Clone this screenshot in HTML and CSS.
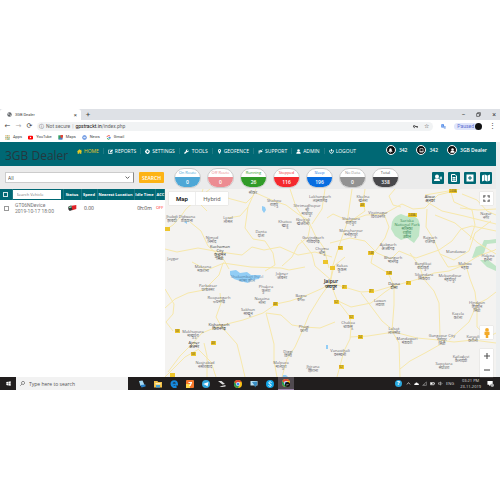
FILE: index.html
```
<!DOCTYPE html>
<html lang="en">
<head>
  <meta charset="UTF-8">
  <meta name="viewport" content="width=device-width, initial-scale=1.0">
  <title>3GB Dealer</title>
  <link rel="stylesheet" href="styles.css">
</head>
<body>

<svg class="sprite" aria-hidden="true">
  <symbol id="home" viewBox="0 0 16 16"><path d="M8 1 0 8l1 1 1-1v7h5v-4h2v4h5V8l1 1 1-1-2-2V2h-2v2z"/></symbol>
  <symbol id="edit" viewBox="0 0 16 16"><path d="M1 2h9L8 4H3v9h9V9l2-2v8H1z"/><path d="m6 8 7-7 3 3-7 7H6z"/></symbol>
  <symbol id="gear" viewBox="0 0 16 16"><path fill-rule="evenodd" d="M6 0h4v3l2-1 3 3-2 2h3v3h-3l1 3-3 2-1-2v3H6v-3l-2 2-3-3 2-2H0V6h3L1 4l3-3 2 2zM8 5a3 3 0 1 0 .1 0z"/></symbol>
  <symbol id="wrench" viewBox="0 0 16 16"><path d="M15 4 12 7 9 4l3-3a5 5 0 0 0-6 6L0 13l3 3 6-6a5 5 0 0 0 6-6z"/></symbol>
  <symbol id="pin" viewBox="0 0 16 16"><path fill-rule="evenodd" d="M8 0a5 5 0 0 0-5 5c0 4 5 11 5 11s5-7 5-11a5 5 0 0 0-5-5zm0 3a2 2 0 1 1-.1 0z"/></symbol>
  <symbol id="swap" viewBox="0 0 16 16"><path d="M2 14V5h6V2l7 5-7 5V8H5v6zM12 1h3v3z"/></symbol>
  <symbol id="user" viewBox="0 0 16 16"><circle cx="8" cy="5" r="4"/><path d="M1 15c0-5 3-6 7-6s7 1 7 6z"/></symbol>
  <symbol id="power" viewBox="0 0 16 16"><path fill="none" stroke="currentColor" stroke-width="3" d="M4 3a6 6 0 1 0 8 0M8 0v8"/></symbol>
  <symbol id="bell" viewBox="0 0 16 16"><path d="M8 1c-4 0-4 4-4 7l-3 4h14l-3-4c0-3 0-7-4-7zM6 13h4l-2 2z"/></symbol>
  <symbol id="inbox" viewBox="0 0 16 16"><path fill="none" stroke="currentColor" stroke-width="2" d="M3 2h10v11H3zM2 11h12"/></symbol>
  <symbol id="adduser" viewBox="0 0 16 16"><circle cx="6" cy="5" r="4"/><path d="M0 14c0-4 2-5 6-5s6 1 6 5zM11 7h2V5h2v2h1v2h-1v2h-2V9h-2z"/></symbol>
  <symbol id="file" viewBox="0 0 16 16"><path fill="none" stroke="currentColor" stroke-width="2" d="M3 1h7l3 3v11H3zM5 7h6M5 10h6M5 12h6"/></symbol>
  <symbol id="plusbox" viewBox="0 0 16 16"><path fill-rule="evenodd" d="M1 1h14v14H1zm6 3v3H4v2h3v3h2V9h3V7H9V4z"/></symbol>
  <symbol id="mapicon" viewBox="0 0 16 16"><path d="m0 3 5-2v12l-5 2zM6 1l4 2v12l-4-2zM11 3l5-2v12l-5 2z"/></symbol>
  <symbol id="lens" viewBox="0 0 16 16"><path fill="none" stroke="currentColor" stroke-width="2" d="M10 1a5 5 0 1 1-.1 0M6 10l-5 5"/></symbol>
  <symbol id="chrome" viewBox="0 0 16 16"><circle cx="8" cy="8" r="8" fill="#fbc117"/><path fill="#e04434" d="M1 4a8 8 0 0 1 14 0H8L5 9z"/><path fill="#249b57" d="M1 4a8 8 0 0 0 7 12l3-6-5 1z"/><circle cx="8" cy="8" r="4" fill="#fff"/><circle cx="8" cy="8" r="3" fill="#4285f4"/></symbol>
</svg>

<div class="browser">
  <div class="tabs">
    <div class="tab">
      <svg viewBox="0 0 16 16"><circle cx="8" cy="8" r="7" fill="#5f6368"/><path fill="#fff" d="M3 5h4l1 3-3 1zM9 9h4l-3 4z"/></svg>
      <span>3GB Dealer</span>
      <button aria-label="Close tab">×</button>
    </div>
    <button class="newtab" aria-label="New tab">+</button>
    <div class="window-buttons">
      <button aria-label="Minimize">−</button>
      <button aria-label="Restore"><svg viewBox="0 0 16 16"><path fill="none" stroke="#333" stroke-width="2" d="M2 5h9v9H2zM5 5V2h9v9h-3"/></svg></button>
      <button aria-label="Close">×</button>
    </div>
  </div>

  <div class="toolbar">
    <button aria-label="Back">←</button>
    <button class="muted" aria-label="Forward">→</button>
    <button aria-label="Reload">⟳</button>
    <div class="address">
      <span class="info">ⓘ</span><span class="insecure">Not secure</span><span class="bar">|</span>
      <span class="url"><b>gpstrackt.in</b>/index.php</span>
      <svg class="key" viewBox="0 0 16 16"><path fill="none" stroke="#444" stroke-width="3" d="M4 5a3 3 0 1 0 .1 0M7 8h8v4M12 8v3"/></svg>
      <span class="star">☆</span>
    </div>
    <svg class="translate" viewBox="0 0 16 16"><path fill="#4080e8" d="M1 1h8l2 10H1z"/><path fill="#9bb8e8" d="M8 6h7v9H9z"/><path stroke="#fff" d="M3 6h5M5 4v5"/></svg>
    <div class="profile">Paused <i></i></div>
    <span class="dots">⋮</span>
  </div>

  <div class="bookmarks">
    <a href="#"><svg viewBox="0 0 16 16"><path fill="#e3a74f" d="M1 1h4v4H1zM11 1h4v4h-4zM6 6h4v4H6zM1 11h4v4H1z"/><path fill="#8ab28b" d="M6 1h4v4H6zM1 6h4v4H1zM11 6h4v4h-4zM6 11h9v4H6z"/></svg>Apps</a>
    <a href="#"><svg viewBox="0 0 16 16"><rect y="2" width="16" height="12" rx="3" fill="#f00"/><path fill="#fff" d="m6 5 5 3-5 3z"/></svg>YouTube</a>
    <a href="#"><svg viewBox="0 0 16 16"><path fill="#34a065" d="M1 1h13v13H1z"/><path fill="#4778da" d="m1 14 13-10v10z"/><path fill="#e44439" d="M8 0h8v6l-4 5-4-5z"/></svg>Maps</a>
    <a href="#"><svg viewBox="0 0 16 16"><circle cx="8" cy="8" r="7" fill="#4a7fda"/><path fill="#dce7fa" d="M4 5h8v6H4z"/></svg>News</a>
    <a href="#"><svg viewBox="0 0 16 16"><path fill="none" stroke="#ea4335" stroke-width="3" d="M3 6a6 6 0 0 1 10-2"/><path fill="none" stroke="#34a853" stroke-width="3" d="M3 10a6 6 0 0 0 9 2"/><path fill="none" stroke="#4285f4" stroke-width="3" d="M8 8h6c0 2-1 3-2 4"/></svg>Gmail</a>
  </div>
</div>

<div class="page">
  <header class="header">
    <div class="brand">3GB Dealer</div>
    <nav class="nav">
      <a class="active" href="#"><svg><use href="#home"/></svg>HOME</a>
      <a href="#"><svg><use href="#edit"/></svg>REPORTS</a>
      <a href="#"><svg><use href="#gear"/></svg>SETTINGS</a>
      <a class="wide" href="#"><svg><use href="#wrench"/></svg>TOOLS</a>
      <a href="#"><svg><use href="#pin"/></svg>GEOFENCE</a>
      <a href="#"><svg><use href="#swap"/></svg>SUPPORT</a>
      <a href="#"><svg><use href="#user"/></svg>ADMIN</a>
      <a href="#"><svg><use href="#power"/></svg>LOGOUT</a>
    </nav>
    <div class="account">
      <a href="#"><i><svg><use href="#bell"/></svg></i>342</a>
      <a href="#"><i><svg><use href="#inbox"/></svg></i>342</a>
      <a href="#"><i><svg><use href="#user"/></svg></i>3GB Dealer</a>
    </div>
  </header>

  <div class="filters">
    <div class="search">
      <div class="dropdown">
        <select aria-label="Group"><option>All</option></select>
        <svg viewBox="0 0 16 16"><path fill="none" stroke="#555" stroke-width="3" d="m2 5 6 6 6-6"/></svg>
      </div>
      <button>SEARCH</button>
    </div>
    <div class="status">
      <div class="pill on-route"><span>On Route</span><b>0</b></div>
      <div class="pill off-route"><span>Off Route</span><b>0</b></div>
      <div class="pill running"><span>Running</span><b>26</b></div>
      <div class="pill stopped"><span>Stopped</span><b>116</b></div>
      <div class="pill sleep"><span>Sleep</span><b>196</b></div>
      <div class="pill no-data"><span>No Data</span><b>0</b></div>
      <div class="pill total"><span>Total</span><b>338</b></div>
    </div>
    <div class="actions">
      <button aria-label="Add user"><svg><use href="#adduser"/></svg></button>
      <button aria-label="Report"><svg><use href="#file"/></svg></button>
      <button aria-label="Add"><svg><use href="#plusbox"/></svg></button>
      <button aria-label="Map"><svg><use href="#mapicon"/></svg></button>
    </div>
  </div>

  <main class="content">
    <div class="list">
      <table>
        <thead>
          <tr>
            <th class="check"><input type="checkbox" aria-label="Select all"></th>
            <th class="vehicle"><input type="text" placeholder="Search Vehicle" aria-label="Search Vehicle"></th>
            <th class="state">Status</th>
            <th class="speed">Speed</th>
            <th class="location">Nearest Location</th>
            <th class="idle">Idle Time</th>
            <th class="acc">ACC</th>
          </tr>
        </thead>
        <tbody>
          <tr>
            <td><input type="checkbox" aria-label="Select vehicle"></td>
            <td class="name">GT06NDevice<br>2019-10-17 18:00</td>
            <td><svg class="truck" viewBox="0 0 27 18"><path fill="#e02228" d="M11 2 25 0v12l-13 4z"/><path fill="#333" d="m1 5 9-4 3 14-8 3-4-5z"/><path fill="#8da" d="m3 6 6-2 1 4-7 1z"/></svg></td>
            <td>0.00</td>
            <td></td>
            <td>0h:0m</td>
            <td class="acc off">OFF</td>
          </tr>
        </tbody>
      </table>
    </div>

    <div class="map">
      <svg class="canvas" viewBox="165 189 331 188" preserveAspectRatio="xMidYMid slice">
        <path class="park" d="M392 222q2-6 9-8l5 2 5-1q8 2 9 10l-1 11-5 7-7-5-6 2-6-4-4-7z"/>
        <path class="park" d="m472 258 4-11 6-2 2-5h5l7-1v4l-9 1-3 9-6 4zm8 2h8l8 6v5l-9-4z"/>
        <path class="water" d="m230 271 6-1 4 3 7-1 4 3h10l-2 4-8 1-3 3-8-2-6-2-4-4zM262 206l3 1 1 3-2 3-2-3zM184 222l3-1v3zM326 345h2v4h-2zM282 375h4l2 2h-6z"/>

        <g class="road">
          <path d="M165 230l8-5 8-9 5-7 10-9 14-11M190 222l11 9 7 15 16 14 5 9M165 249l12 3 21-4 22 4 22 3 10-8 12 3 16-3 18 8 17-3 17 5M256 189l-8 18-3 21 8 11 12 2 8 12 2 12-10 6M256 193l18 8 12 4 12 9 10 6 7 15 9 13 5 20M228 218l12-2 8-9"/>
          <path d="M196 200l17-7 18 6 15 4 8-8M290 189l6 18 7 11 7 9-2 10-10 8-6 12-10 9M325 189l-3 20-10 15M330 283l-7 5-18 8-15 5-14 3-13 9-20 7-24 6-17 7-10 11-12 12-12 16"/>
          <path d="M165 289l9 15-1 10-7 8 7 9M165 308l10-9 13-6 16-3 15-15 4-12 14 2 14 2 30 1 8 2 16-3M192 262l15 8 17-7M203 189l-4 14 8 8M221 326l-5-9 5-14-1-10M204 343l3 13 0 21M196 342l-6 6M221 326l16 18 4 16 4 17M266 313l8 31 0 17 3 16M266 313l15 2 11 10 12 2 16 1 15-6M330 283l-10 14-11 18-5 12-9 20-8 12-5 18M165 377l20-20 14-8M199 350l12 12 5 15"/>
          <path d="M330 283l3-18 7-22 7-20 5-34M331 280l-16-14-3-12-11-14M330 283l14 4 17 5 15-1 17-5 15-4 14-4 12-5 15-2 15-6 14-9 17-6 10-9M332 287l5 13 13 17 1 11-1 11-6 12-7 26M336 300l15 7 20-4 14-11 9-6M394 286l0 19-2 26 7 12 1 34M350 337l18-1 26-4 23 6 21 2 16 2 19-2 23 3M400 369l10-8 15-8 16-9M422 277l12 14 5 12 1 33M465 262l5 17 5 13 2 17 0 18 11 10 8-4M477 304l10-5 9-7M477 304l-8 18-20 18M361 293l12 16 9 12 12 10"/>
          <path d="M330 243l20-5 15 3 12 12 14 6 8-8 17 7 23-8 13-9 9-12 11-3 24 5M349 221l17-6 18-1 18-10 11 5 12-1 13-13 16-4M349 221l-16-7-6 4M384 214l5 13-4 11-11 15M365 189l-2 13 2 9-14 10M395 189l-6 7 4 9 8 2M427 202l15 9 22 5 32 8M427 209l-1 18 8 13 6 14 14 6 15-9 6-18 16-12M435 215l20 8 14 12 9 8 18 11M450 189l4 13 18 8 3 15-5 15M462 194l15 6 10 11 9 4M373 253l-2 10 17 10 6 13M410 253l10 14 3 10M345 257l-11 9-4 17M440 254l8 13 17-2M425 195l35-6M460 208l18 2 18-1"/>
        </g>

        <g class="shield">
          <rect x="165" y="227" width="5" height="4"/><rect x="273" y="302" width="5" height="4"/><rect x="175" y="329" width="5" height="4"/><rect x="211" y="341" width="5" height="4"/><rect x="191" y="352" width="5" height="4"/><rect x="170" y="373" width="5" height="4"/><rect x="323" y="260" width="5" height="4"/><rect x="330" y="266" width="5" height="4"/><rect x="334" y="300" width="5" height="4"/><rect x="342" y="285" width="5" height="4"/><rect x="369" y="289" width="5" height="4"/><rect x="406" y="281" width="5" height="4"/><rect x="386" y="271" width="6" height="4"/><rect x="349" y="315" width="5" height="4"/><rect x="358" y="335" width="5" height="4"/><rect x="339" y="365" width="5" height="4"/><rect x="360" y="203" width="5" height="4"/><rect x="408" y="213" width="9" height="4"/><rect x="449" y="189" width="8" height="4"/><rect x="338" y="246" width="5" height="4"/><rect x="368" y="251" width="6" height="4"/>
        </g>
        <g class="number">
          <text x="275" y="305">48</text><text x="177" y="332">58</text><text x="213" y="344">48</text><text x="193" y="355">58</text><text x="336" y="303">52</text><text x="344" y="288">21</text><text x="371" y="292">21</text><text x="408" y="284">21</text><text x="389" y="274">148</text><text x="351" y="318">52</text><text x="360" y="338">24</text><text x="341" y="368">52</text><text x="362" y="206">48</text><text x="412" y="216">248A</text><text x="453" y="192">248A</text><text x="340" y="249">52</text><text x="371" y="254">148</text>
        </g>

        <g class="place">
          <text x="253" y="194">सीकर</text>
          <text x="274" y="202">Shahpu<tspan x="274" dy="4">शाहपु</tspan></text>
          <text x="320" y="198">Lakhangarh<tspan x="320" dy="4">लक्ष्मणगढ़</tspan></text>
          <text x="307" y="207">Shrimadhopur<tspan x="307" dy="4">श्री</tspan><tspan x="307" dy="4">माधोपुर</tspan></text>
          <text x="172" y="218">Jhabdi<tspan x="172" dy="4">झाबदी</tspan></text>
          <text x="187" y="218">Didwana<tspan x="187" dy="4">डीडवाना</tspan></text>
          <text x="228" y="219">Losal<tspan x="228" dy="4">लोसल</tspan></text>
          <text x="285" y="223">Khatoo<tspan x="285" dy="4">खाटू</tspan></text>
          <text x="303" y="221">Khejroli<tspan x="303" dy="4">खेजरोली</tspan></text>
          <text x="261" y="233">Danta<tspan x="261" dy="4">दांता</tspan></text>
          <text x="212" y="239">Nimod<tspan x="212" dy="4">निमोद</tspan></text>
          <text class="town" x="220" y="248">Kuchaman<tspan x="220" dy="4">City</tspan><tspan x="220" dy="4">कुचामन</tspan><tspan x="220" dy="4">सिटी</tspan></text>
          <text x="313" y="239">Govindgarh<tspan x="313" dy="4">गोविंदगढ़</tspan></text>
          <text x="322" y="250">Chomu<tspan x="322" dy="4">चौमू</tspan></text>
          <text x="173" y="260">Jaygar</text>
          <text x="363" y="198">Khelna<tspan x="363" dy="4">खेलना</tspan></text>
          <text class="town" x="430" y="198">Alwar<tspan x="430" dy="4">अलवर</tspan></text>
          <text x="351" y="220">Shahpura<tspan x="351" dy="4">शाहपुरा</tspan></text>
          <text x="378" y="214">Viratnagar<tspan x="378" dy="4">विराटनगर</tspan></text>
          <text x="351" y="232">Manoharpur<tspan x="351" dy="4">मनोहरपुर</tspan></text>
          <text class="green" x="407" y="222">Sariska<tspan x="407" dy="4">National Park</tspan><tspan x="407" dy="4">सरिस्का</tspan><tspan x="407" dy="4">राष्ट्रीय</tspan><tspan x="407" dy="4">उद्यान</tspan></text>
          <text x="430" y="239">Rajgarh<tspan x="430" dy="4">राजगढ़</tspan></text>
          <text x="388" y="246">Ajabgarh<tspan x="388" dy="4">अजबगढ़</tspan></text>
          <text x="393" y="259">Bhangarh<tspan x="393" dy="4">भानगढ़</tspan></text>
          <text x="456" y="253">Mandawar</text>
          <text x="486" y="215">Nagar<tspan x="486" dy="4">नगर</tspan></text>
          <text x="488" y="257">Halena<tspan x="488" dy="4">हलैना</tspan></text>
          <text x="203" y="268">Makrana<tspan x="203" dy="4">मकराना</tspan></text>
          <text class="blue" x="247" y="278">Shakambari Jheel<tspan x="247" dy="4">सांभर झील</tspan></text>
          <text x="282" y="275">Jobner<tspan x="282" dy="4">जोबनेर</tspan></text>
          <text x="266" y="288">Phulera<tspan x="266" dy="4">फुलेरा</tspan></text>
          <text x="208" y="287">Parbatsar<tspan x="208" dy="4">परबतसर</tspan></text>
          <text x="219" y="299">Roopangarh<tspan x="219" dy="4">रूपनगढ़</tspan></text>
          <text x="262" y="300">Naraina<tspan x="262" dy="4">नरैना</tspan></text>
          <text x="301" y="297">Bagru<tspan x="301" dy="4">बगरू</tspan></text>
          <text x="248" y="311">Sakhun<tspan x="248" dy="4">साखून</tspan></text>
          <text class="town" x="219" y="326">Kishangarh<tspan x="219" dy="4">किशनगढ़</tspan></text>
          <text x="193" y="333">Makhupura<tspan x="193" dy="4">माखुपुरा</tspan></text>
          <text class="town" x="194" y="344">Ajmer<tspan x="194" dy="4">अजमेर</tspan></text>
          <text x="205" y="364">Nasirabad<tspan x="205" dy="4">नसीराबाद</tspan></text>
          <text x="304" y="328">Phagi<tspan x="304" dy="4">फागी</tspan></text>
          <text x="288" y="353">Diggi<tspan x="288" dy="4">डिग्गी</tspan></text>
          <text x="281" y="364">Malpura<tspan x="281" dy="4">मालपुरा</tspan></text>
          <text x="313" y="368">Jhirana<tspan x="313" dy="4">झिराना</tspan></text>
          <text class="city" x="331" y="283">Jaipur<tspan x="331" dy="5">जयपुर</tspan></text>
          <text x="342" y="267">Kukas<tspan x="342" dy="4">कूकस</tspan></text>
          <text x="423" y="265">Bandikui<tspan x="423" dy="4">बांदीकुई</tspan></text>
          <text x="465" y="265">Mahwa<tspan x="465" dy="4">महवा</tspan></text>
          <text x="424" y="276">Sikandara<tspan x="424" dy="4">सिकंदरा</tspan></text>
          <text x="450" y="277">Mehandipur<tspan x="450" dy="4">मेहंदीपुर</tspan></text>
          <text class="town" x="394" y="285">Dausa<tspan x="394" dy="4">दौसा</tspan></text>
          <text x="380" y="302">Lawan<tspan x="380" dy="4">लवाण</tspan></text>
          <text x="477" y="304">Hindaun<tspan x="477" dy="4">हिण्डौन</tspan><tspan x="477" dy="4">सिटी</tspan></text>
          <text x="458" y="315">Karela<tspan x="458" dy="4">करेला</tspan></text>
          <text x="348" y="324">Chaksu<tspan x="348" dy="4">चाकसू</tspan></text>
          <text x="394" y="330">Lalsot<tspan x="394" dy="4">लालसोट</tspan></text>
          <text x="407" y="340">Mandawari<tspan x="407" dy="4">मंडावरी</tspan></text>
          <text x="442" y="337">Gangapur City<tspan x="442" dy="4">गंगापुर</tspan><tspan x="442" dy="4">सिटी</tspan></text>
          <text x="473" y="338">Karauli<tspan x="473" dy="4">करौली</tspan></text>
          <text x="340" y="352">Vanasthali<tspan x="340" dy="4">वनस्थली</tspan></text>
          <text x="461" y="358">Kailadevi<tspan x="461" dy="4">कैलादेवी</tspan></text>
          <text x="444" y="365">Sapotara<tspan x="444" dy="4">सपोटरा</tspan></text>
        </g>
      </svg>

      <div class="maptype">
        <button class="selected">Map</button>
        <button>Hybrid</button>
      </div>
      <button class="control fullscreen" aria-label="Full screen"><svg viewBox="0 0 16 16"><path fill="none" stroke="#666" stroke-width="3" d="M2 6V2h4M10 2h4v4M14 10v4h-4M6 14H2v-4"/></svg></button>
      <div class="controls">
        <button class="control" aria-label="Street View"><svg viewBox="0 0 16 16"><circle cx="8" cy="3" r="3" fill="#f3aa28"/><path fill="#f3aa28" d="M4 6h8v5h-2v5H6v-5H4z"/></svg></button>
        <div class="zoom">
          <button aria-label="Zoom in"><svg viewBox="0 0 16 16"><path stroke="#555" stroke-width="3" d="M0 8h16M8 0v16"/></svg></button>
          <button aria-label="Zoom out"><svg viewBox="0 0 16 16"><path stroke="#555" stroke-width="3" d="M0 8h16"/></svg></button>
        </div>
      </div>
    </div>
  </main>
</div>

<footer class="taskbar">
  <button class="start" aria-label="Start"><svg viewBox="0 0 16 16"><path fill="#fff" d="m1 3 6-1v5H1zM8 2l7-1v6H8zM1 8h6v6l-6-1zM8 8h7v7l-7-1z"/></svg></button>
  <label class="find"><svg><use href="#lens"/></svg><input type="text" placeholder="Type here to search"></label>
  <div class="apps">
    <span><svg viewBox="0 0 16 16"><path fill="#a5d8f2" d="M2 2 9 1l4 9-8 2z"/><path fill="#2a82c8" d="m5 10 10-1v4l-8 2z"/></svg></span>
    <span><svg viewBox="0 0 16 16"><path fill="#f2c14b" d="M0 2h7l1 2h8v11H0z"/><path fill="#fff1b8" d="M3 6h10v3H3z"/><path fill="#4aa5d8" d="M4 10h8v5H4z"/></svg></span>
    <span><svg viewBox="0 0 16 16"><path fill="none" stroke="#1689de" stroke-width="4" d="M3 9h11C14 0 3 1 3 8c0 6 6 7 10 5"/></svg></span>
    <span><svg viewBox="0 0 16 16"><rect width="16" height="16" rx="2" fill="#f4772b"/><path fill="#ffd84d" d="M0 8h8v8H0z"/><path fill="#fff" d="M5 4h7v2L9 12H6l3-6H5z"/></svg></span>
    <span><svg viewBox="0 0 16 16"><circle cx="8" cy="8" r="8" fill="#32a8df"/><path fill="#fff" d="m2 8 11-4-2 9-4-3z"/></svg></span>
    <span><svg viewBox="0 0 16 16"><path fill="#ddd" d="M0 2h7l7 6-5 1zM3 13l12-3v3l-7 1z"/></svg></span>
    <span><svg viewBox="0 0 16 16"><use href="#chrome"/></svg></span>
    <span><svg viewBox="0 0 16 16"><path fill="#b6dff2" d="M1 2h14v9H1z"/><path fill="#398dc3" d="m4 4 10-1v6l-4 6-1-4z"/></svg></span>
    <span><svg viewBox="0 0 16 16"><circle cx="8" cy="8" r="8" fill="#10a5e8"/><path fill="none" stroke="#fff" stroke-width="2" d="M11 5C8 2 4 5 6 7l4 2c2 3-2 5-5 2"/></svg></span>
    <span class="current"><svg viewBox="0 0 16 16"><use href="#chrome"/><circle cx="11" cy="11" r="5" fill="#111"/><path stroke="#fff" d="m8 12 5-1"/></svg></span>
  </div>
  <div class="tray">
    <span class="help">?</span>
    <svg viewBox="0 0 16 16"><path fill="none" stroke="#fff" stroke-width="2" d="m3 11 5-6 5 6"/></svg>
    <svg viewBox="0 0 16 16"><path fill="#fff" d="M2 13c-3-3 0-6 2-5 1-5 7-4 8 0 4 0 5 3 2 5z"/></svg>
    <svg viewBox="0 0 16 16"><path fill="none" stroke="#999" stroke-width="2" d="M2 14 14 3v11zM7 14v-4"/></svg>
    <svg viewBox="0 0 16 16"><path fill="none" stroke="#fff" stroke-width="2" d="M1 5h12v7H1zM13 7h2v3"/><path fill="#fff" d="M2 6h6v5H2z"/></svg>
    <svg viewBox="0 0 16 16"><path fill="none" stroke="#ccc" stroke-width="2" d="M1 6h3l4-3v10l-4-3H1zM11 5q3 3 0 6"/></svg>
    <span class="lang">ENG</span>
    <span class="clock">03:21 PM<br>23-11-2019</span>
    <svg class="notice" viewBox="0 0 16 16"><path fill="#fff" d="M1 2h12v9H8l-3 3v-3H1z"/><circle cx="12" cy="12" r="4" fill="#aaa"/></svg>
  </div>
</footer>

</body>
</html>
```

FILE: styles.css
```
* { box-sizing: border-box; }
body { margin: 0; padding-top: 109px; background: #fff; color: #444; font: 5px/6px "Open Sans", "Noto Sans", sans-serif; }
button, input, select { font: inherit; color: inherit; margin: 0; padding: 0; border: 0; background: none; }
a { color: inherit; text-decoration: none; }
svg { display: block; width: 5px; height: 5px; fill: currentColor; flex: none; }
.sprite { position: absolute; width: 0; height: 0; }

/* browser */
.browser { font-family: Roboto, sans-serif; }
.tabs { display: flex; align-items: center; height: 11px; background: #dee1e6; }
.tab { display: flex; align-items: center; gap: 3px; width: 81px; height: 11px; padding: 0 4px 0 7px; background: #fff; border-radius: 3px 3px 0 0; font-size: 4px; }
.tab button { margin-left: auto; font-size: 6px; }
.newtab { width: 14px; font-size: 8px; }
.window-buttons { display: flex; align-items: center; gap: 11px; margin-left: auto; padding-right: 4px; font-size: 7px; }
.toolbar { display: flex; align-items: center; gap: 4px; height: 12px; padding: 0 4px; }
.toolbar > button { width: 7px; font: 7px/8px "DejaVu Sans", sans-serif; }
.toolbar .muted { color: #aaa; }
.address { display: flex; align-items: center; flex: 1; gap: 2px; height: 9px; padding: 0 4px 0 2px; border-radius: 5px; background: #f1f3f4; }
.address b { font-weight: normal; color: #111; }
.info { font-family: "DejaVu Sans", sans-serif; }
.insecure, .url { color: #666; }
.bar { color: #aaa; }
.key { margin-left: auto; margin-right: 4px; }
.star { font: 6px/6px "DejaVu Sans", sans-serif; }
.translate { margin: 0 4px; }
.profile { display: flex; align-items: center; gap: 1px; padding-left: 3px; border-radius: 5px; background: #e0e6fb; color: #5c6fd0; }
.profile i { width: 7px; height: 7px; border-radius: 50%; background: #111; }
.dots { padding-left: 3px; font-size: 7px; }
.bookmarks { display: flex; align-items: center; gap: 6px; height: 10px; padding: 0 5px; font-size: 4px; }
.bookmarks a { display: flex; align-items: center; gap: 3px; }

/* page */
.page { border-right: 4px solid #eceff0; }
.header { display: flex; height: 24px; background: #006874; color: #fff; }
.brand { width: 73px; padding: 7px 0 0 5px; color: #24383f; font-size: 12px; line-height: 14px; white-space: nowrap; }
.nav { display: flex; align-items: flex-start; padding-top: 6px; }
.nav a { display: flex; align-items: center; gap: 2px; padding: 0 4px; border-right: 1px solid #1f7983; }
.nav a:last-child { border: 0; }
.nav .active { color: #e6c928; }
.nav .wide { gap: 3px; }
.account { display: flex; align-items: flex-start; gap: 9px; margin-left: auto; padding: 3px 9px 0 0; font-weight: 600; }
.account a { display: flex; align-items: center; gap: 3px; }
.account i { display: grid; place-items: center; width: 10px; height: 10px; border: 1px solid #fff; border-radius: 50%; background: #111; }

.filters { display: flex; align-items: center; height: 23px; background: #ebebeb; }
.search { display: flex; gap: 5px; width: 165px; padding-left: 5px; }
.dropdown { position: relative; width: 129px; }
.dropdown select { display: block; appearance: none; width: 100%; height: 11px; padding-left: 2px; border: 1px solid #ccc; border-right: 1px solid #888; background: #fff; }
.dropdown svg { position: absolute; right: 4px; top: 3px; pointer-events: none; }
.search button { width: 25px; height: 11px; border-radius: 1px; background: #fdb316; color: #fff; font-weight: 600; }
.status { display: flex; gap: 6px; padding-left: 9px; }
.pill { width: 27px; height: 20px; border: 1px solid #ccc; border-radius: 10px; overflow: hidden; text-align: center; background: #fff; }
.pill span { display: block; height: 8px; font-size: 4px; line-height: 8px; white-space: nowrap; }
.pill b { display: block; height: 10px; line-height: 10px; font-weight: 600; background: currentColor; }
.pill b::first-line { color: #fff; }
.on-route { color: #4ea7d6; }
.off-route { color: #ec8c92; }
.running { color: #319b29; }
.stopped { color: #f4292e; }
.sleep { color: #086de0; }
.no-data { color: #929292; }
.total { color: #48484b; }
.actions { display: flex; gap: 4px; margin-left: auto; padding-right: 4px; }
.actions button { display: grid; place-items: center; width: 12px; height: 12px; border-radius: 1px; background: #006874; color: #fff; }
.actions svg { width: 8px; height: 8px; }

.content { display: flex; }
.list { width: 165px; overflow: hidden; }
table { width: 100%; table-layout: fixed; border-collapse: collapse; font-size: 4px; }
th { height: 11px; padding: 0; background: #006874; color: #fff; font-weight: 700; white-space: nowrap; border-right: 1px solid #1f7983; }
td { height: 16px; padding: 0; text-align: center; font-size: 5px; }
.check { width: 12px; }
.vehicle { width: 51px; }
.state { width: 18px; }
.speed { width: 16px; }
.location { width: 37px; }
.idle { width: 21px; }
.acc { padding-left: 1px; text-align: left; }
th input[type=text] { display: block; width: 48px; height: 9px; padding-left: 4px; background: #fff; color: #444; font-weight: 400; }
input[type=checkbox] { appearance: none; display: block; width: 5px; height: 5px; margin: auto; border: 1px solid #999; }
th input[type=checkbox] { border-color: #d5e6e8; }
.name { text-align: left; padding-left: 3px; font-family: Roboto, sans-serif; white-space: nowrap; color: #777; }
.truck { width: 9px; height: 6px; margin: auto; }
.off { color: #f22; font-size: 4px; }

.map { position: relative; flex: 1; min-width: 0; background: #f4f3f1; }
.canvas { width: 100%; height: auto; aspect-ratio: 331 / 188; }
.park { fill: #bfe5c6; }
.water { fill: #92cdf5; }
.road { fill: none; stroke: #f7e8ab; stroke-width: 1; stroke-linejoin: round; }
.shield { fill: #edc52c; }
.number { fill: #655719; font-size: 3px; text-anchor: middle; }
.place { fill: #68686c; font-size: 4px; text-anchor: middle; }
.place .town { fill: #333; }
.place .city { fill: #222; font-size: 5px; font-weight: 600; }
.place .green { fill: #3d8857; }
.place .blue { fill: #5585ab; }
.maptype { position: absolute; left: 4px; top: 3px; display: flex; background: #fff; font: 6px/7px Roboto, sans-serif; box-shadow: 0 0 1px #bbb; }
.maptype button { width: 32px; height: 13px; color: #666; }
.maptype button:first-child { width: 27px; border-right: 1px solid #eee; }
.maptype .selected { color: #111; font-weight: 600; }
.control { display: grid; place-items: center; width: 13px; height: 13px; background: #fff; box-shadow: 0 0 1px #bbb; }
.control svg { width: 7px; height: 7px; }
.fullscreen { position: absolute; right: 3px; top: 3px; }
.controls { position: absolute; right: 3px; bottom: 0; display: grid; gap: 10px; }
.controls .control svg { width: 10px; height: 10px; }
.zoom { display: grid; background: #fff; box-shadow: 0 0 1px #bbb; }
.zoom button { display: grid; place-items: center; height: 14px; }
.zoom svg { width: 6px; height: 6px; }

/* desktop bar */
.taskbar { display: flex; align-items: center; height: 13px; background: #211e1e; color: #ddd; }
.start { display: grid; place-items: center; width: 16px; height: 13px; }
.find { display: flex; align-items: center; gap: 4px; width: 112px; height: 13px; padding-left: 4px; background: #f2f2f2; color: #444; }
.find input { width: 90px; }
.find input::placeholder { color: #555; opacity: 1; }
.apps { display: flex; margin-left: 6px; }
.apps span { display: grid; place-items: center; width: 16px; height: 13px; }
.apps svg { width: 8px; height: 8px; }
.apps .current { background: #504a50; border-bottom: 1px solid #9a83a8; }
.tray { display: flex; align-items: center; gap: 3px; margin-left: auto; padding-right: 6px; font-size: 4px; }
.help { width: 7px; height: 7px; margin-right: 1px; border-radius: 50%; background: #29a9df; color: #fff; font-size: 6px; font-weight: 700; line-height: 7px; text-align: center; }
.clock { margin: 0 3px; text-align: center; }
.tray .notice { width: 7px; height: 7px; }
```
